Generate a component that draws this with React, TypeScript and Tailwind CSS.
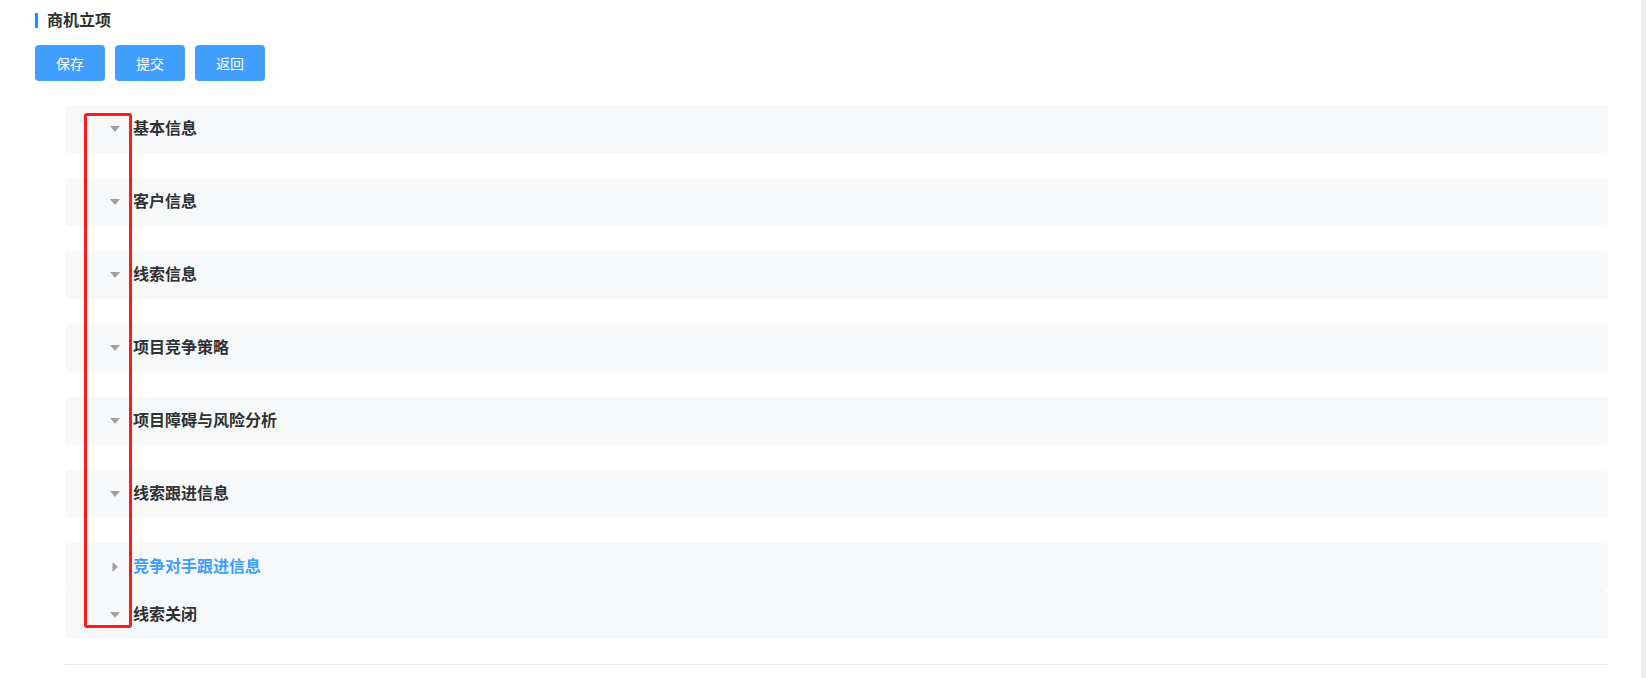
const sections = [
  { title: "基本信息" },
  { title: "客户信息" },
  { title: "线索信息" },
  { title: "项目竞争策略" },
  { title: "项目障碍与风险分析" },
  { title: "线索跟进信息" },
  { title: "竞争对手跟进信息", collapsed: true, active: true, joined: true },
  { title: "线索关闭" },
];

function Caret({ collapsed }: { collapsed?: boolean }) {
  if (collapsed) {
    return (
      <svg width="10" height="10" viewBox="0 0 10 10" className="shrink-0">
        <path d="M2.5 0 L8 5 L2.5 10 Z" fill="#a0a0a0" />
      </svg>
    );
  }
  return (
    <svg width="10" height="6" viewBox="0 0 10 6" className="shrink-0">
      <path d="M0 0 L10 0 L5 6 Z" fill="#a0a0a0" />
    </svg>
  );
}

export default function App() {
  return (
    <div
      className="relative flex h-[678px] w-full bg-white text-[#303133]"
      style={{ fontFamily: '"Noto Sans CJK SC", "Noto Sans", sans-serif' }}
    >
      <div className="flex-1 pl-[35px] pt-[12px]">
        {/* header */}
        <div className="flex h-[16px] items-center">
          <span className="h-[15px] w-[3px] bg-[#1890ff]" />
          <h1 className="ml-[9px] mb-[2px] text-[16px] leading-[16px] font-bold">商机立项</h1>
        </div>

        <div className="mt-[17px] flex gap-[10px]">
          {["保存", "提交", "返回"].map((t) => (
            <button
              key={t}
              className="h-[36px] w-[70px] rounded-[4px] bg-[#409eff] text-[14px] text-white"
            >
              {t}
            </button>
          ))}
        </div>

        {/* collapse panels */}
        <div className="mt-[24px] ml-[30px] mr-[33px]">
          {sections.map((s) => (
            <div
              key={s.title}
              className={`flex h-[48px] items-center rounded-[4px] bg-[#f7f8fa] pl-[45px] ${
                s.joined ? "" : "mb-[25px]"
              }`}
            >
              <div className="flex w-[10px] justify-center">
                <Caret collapsed={s.collapsed} />
              </div>
              <span
                className={`ml-[13px] mb-[4px] text-[16px] leading-[16px] font-bold ${
                  s.active ? "text-[#409eff]" : "text-[#303133]"
                }`}
              >
                {s.title}
              </span>
            </div>
          ))}
          <div className="h-px bg-[#e6e6f0]" />
        </div>
      </div>

      {/* scrollbar track */}
      <div className="w-[5px] bg-[#ededed]" />

      {/* red annotation box */}
      <div className="absolute left-[84px] top-[113px] h-[515px] w-[48px] rounded-[3px] border-[3px] border-[#ff1a1a]" />
    </div>
  );
}
